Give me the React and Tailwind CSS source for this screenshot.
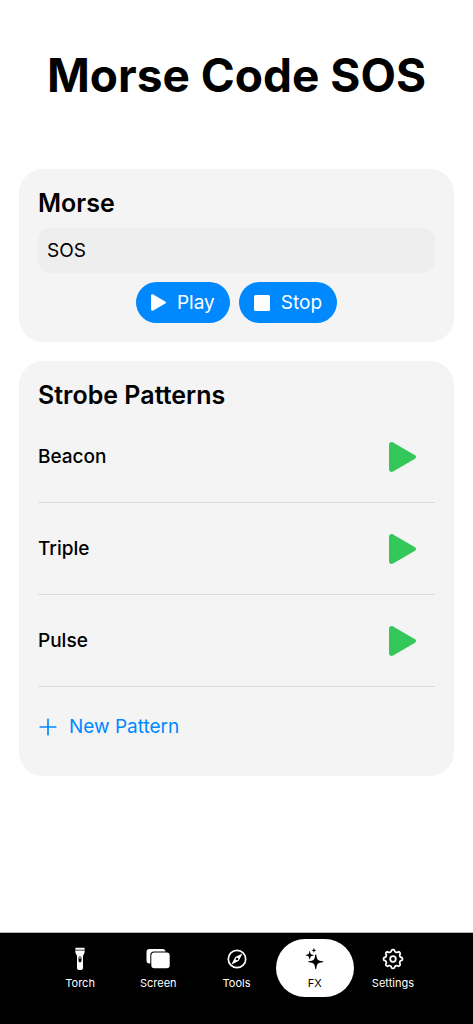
import React, { useState } from 'react';
import clsx from 'clsx';

const PATTERNS = ['Beacon', 'Triple', 'Pulse'];

const PlayIcon = ({ className }) => (
  <svg viewBox="0 0 27 30" className={className} fill="currentColor" aria-hidden="true">
    <path d="M0 2.8C0 .6 2.2-.6 4.1.5L25.6 13c1.9 1.1 1.9 2.9 0 4L4.1 29.5C2.2 30.6 0 29.4 0 27.2Z" />
  </svg>
);

const StopIcon = ({ className }) => (
  <svg viewBox="0 0 16 16" className={className} fill="currentColor" aria-hidden="true">
    <rect width="16" height="16" rx="1.5" />
  </svg>
);

const PlusIcon = ({ className }) => (
  <svg viewBox="0 0 20 20" className={className} fill="none" stroke="currentColor" strokeWidth="1.7" strokeLinecap="round" aria-hidden="true">
    <path d="M10 2.3v15.4M2.3 10h15.4" />
  </svg>
);

const TorchIcon = () => (
  <svg viewBox="0 0 24 24" className="size-6" fill="currentColor" aria-hidden="true">
    <path d="M8.4.8h7.2c.7 0 1.1.4 1.1.9v1H7.3v-1c0-.5.4-.9 1.1-.9Z" />
    <path
      fillRule="evenodd"
      d="M7.3 3.6h9.4v.7c0 1.6-.6 2.6-1.2 3.5-.4.6-.5 1.1-.5 1.9v11.4c0 1.2-.6 1.8-1.7 1.8h-2.6C9.6 22.900 9 22.300 9 21.100V9.700c0-.8-.1-1.300-.5-1.900-.6-.9-1.200-1.900-1.200-3.500ZM12 9.500c-.9 0-1.500.6-1.500 1.500v2.800c0 .9.600 1.500 1.500 1.500s1.500-.6 1.500-1.500V11c0-.9-.6-1.500-1.500-1.500Z"
    />
    <circle cx="12" cy="11.100" r=".8" />
  </svg>
);

const ScreenIcon = () => (
  <svg viewBox="0 0 24 24" className="size-6" fill="currentColor" aria-hidden="true">
    <path d="M3.5 2h13.300c1.600 0 2.600.9 2.800 2.400H8C5.700 4.400 4.300 5.800 4.300 8v8.500H3.500C1.600 16.500.5 15.400.5 13.500V5c0-1.900 1.100-3 3-3Z" />
    <rect x="5.3" y="5.5" width="18.4" height="15.7" rx="3" />
  </svg>
);

const ToolsIcon = () => (
  <svg viewBox="0 0 24 24" className="size-6" fill="none" stroke="currentColor" aria-hidden="true">
    <circle cx="12" cy="12" r="8.7" strokeWidth="1.7" />
    <path
      fill="currentColor"
      fillRule="evenodd"
      stroke="none"
      d="M16.300 6.900c.5-.3 1 .2.700.7l-3.100 6c-.1.200-.2.300-.4.400l-5.900 3.100c-.5.300-1-.2-.7-.7l3.100-5.900c.1-.2.200-.3.400-.4ZM12 10.700a1.300 1.300 0 1 0 0 2.600 1.300 1.300 0 0 0 0-2.600Z"
    />
  </svg>
);

const FxIcon = () => (
  <svg viewBox="0 0 24 24" className="size-6" fill="currentColor" aria-hidden="true">
    <path d="M12.800 7.200c.3 0 .5.200.5.500.8 5.200 1.300 5.700 6.500 6.500.7.100.7.900 0 1-5.200.8-5.700 1.300-6.500 6.500-.1.700-.9.700-1 0-.8-5.200-1.300-5.700-6.500-6.500-.7-.1-.7-.9 0-1 5.200-.8 5.700-1.300 6.500-6.500 0-.3.200-.5.500-.5Z" />
    <path d="M6.700 4.100c.2 0 .3.100.3.300.5 2.700.8 3 3.500 3.500.4.100.4.500 0 .6-2.700.5-3 .8-3.500 3.500-.1.400-.5.400-.6 0-.5-2.700-.8-3-3.500-3.500-.4-.1-.4-.5 0-.6 2.700-.5 3-.8 3.500-3.500 0-.2.100-.3.300-.3Z" />
    <path d="M10.900 1c.1 0 .2.100.2.200.3 1.500.5 1.700 2 2 .3.100.3.400 0 .4-1.500.3-1.700.5-2 2 0 .3-.3.300-.4 0-.3-1.500-.5-1.700-2-2-.3 0-.3-.3 0-.4 1.500-.3 1.700-.5 2-2 0-.1.100-.2.200-.2Z" />
  </svg>
);

const SettingsIcon = () => (
  <svg viewBox="0.5 0.5 23 23" className="size-6" fill="none" stroke="currentColor" strokeWidth="1.7" strokeLinejoin="round" aria-hidden="true">
    <path d="M10.6 3.6A1.8 1.8 0 0 1 13.4 3.6A2.1 2.1 0 0 0 16.95 5.07A1.8 1.8 0 0 1 18.93 7.05A2.1 2.1 0 0 0 20.4 10.6A1.8 1.8 0 0 1 20.4 13.4A2.1 2.1 0 0 0 18.93 16.95A1.8 1.8 0 0 1 16.95 18.93A2.1 2.1 0 0 0 13.4 20.4A1.8 1.8 0 0 1 10.6 20.4A2.1 2.1 0 0 0 7.05 18.93A1.8 1.8 0 0 1 5.07 16.95A2.1 2.1 0 0 0 3.6 13.4A1.8 1.8 0 0 1 3.6 10.6A2.1 2.1 0 0 0 5.07 7.05A1.8 1.8 0 0 1 7.05 5.07A2.1 2.1 0 0 0 10.6 3.6Z" />
    <circle cx="12" cy="12" r="2.7" />
  </svg>
);

const TABS = [
  { name: 'Torch', icon: TorchIcon },
  { name: 'Screen', icon: ScreenIcon },
  { name: 'Tools', icon: ToolsIcon },
  { name: 'FX', icon: FxIcon },
  { name: 'Settings', icon: SettingsIcon },
];

const Card = ({ title, children }) => (
  <section className="rounded-3xl bg-[#f4f4f4] p-[19px]">
    <h2 className="text-[25px] leading-[31px] font-semibold">{title}</h2>
    {children}
  </section>
);

const MorseCard = () => {
  const [message, setMessage] = useState('SOS');

  return (
    <Card title="Morse">
      <input
        type="text"
        aria-label="Morse message"
        value={message}
        onChange={(e) => setMessage(e.target.value)}
        className="mt-[9px] block h-[45px] w-full rounded-xl bg-[#eeeeee] px-[9px] text-[19px] leading-[30px] focus:outline-none"
      />
      <div className="mt-[9px] flex justify-center gap-[9px] text-[19px] leading-[30px] text-white">
        <button type="button" className="flex h-[41px] items-center gap-[11px] rounded-full bg-[#0088ff] px-[15px]">
          <PlayIcon className="h-[17px] w-[15px]" />
          Play
        </button>
        <button type="button" className="flex h-[41px] items-center gap-[11px] rounded-full bg-[#0088ff] px-[15px]">
          <StopIcon className="size-4" />
          Stop
        </button>
      </div>
    </Card>
  );
};

const PatternsCard = () => (
  <Card title="Strobe Patterns">
    <ul>
      {PATTERNS.map((pattern) => (
        <li key={pattern} className="flex h-[92px] items-center justify-between border-b border-[#dadada]">
          <span className="text-[19px] leading-[30px] font-medium">{pattern}</span>
          <button type="button" aria-label={`Play ${pattern}`} className="px-[19px] text-[#34c759]">
            <PlayIcon className="h-[30px] w-[27px]" />
          </button>
        </li>
      ))}
    </ul>
    <button type="button" className="mt-[9px] flex h-[61px] items-center gap-[11px] text-[19px] leading-[30px] text-[#0088ff]">
      <PlusIcon className="size-5" />
      New Pattern
    </button>
  </Card>
);

const TabBar = ({ active }) => (
  <nav className="mt-auto flex border-t border-[#b5b5b5] bg-black px-[41px] pt-[6px] pb-[27px]">
    {TABS.map(({ name, icon: Icon }) => (
      <a
        key={name}
        href={`#${name.toLowerCase()}`}
        aria-current={name === active ? 'page' : undefined}
        className={clsx(
          'flex h-[58px] flex-1 flex-col items-center gap-1 rounded-full pt-2 text-[11px] leading-4',
          name === active ? 'bg-white text-black' : 'text-white'
        )}
      >
        <Icon />
        {name}
      </a>
    ))}
  </nav>
);

export default function App() {
  return (
    <div className="flex min-h-screen flex-col bg-white font-['Inter',sans-serif] text-black">
      <header className="px-4 pt-[47px] pb-[66px] text-center">
        <h1 className="text-[46px] leading-14 font-bold whitespace-nowrap">Morse Code SOS</h1>
      </header>
      <main className="flex flex-col gap-[19px] px-[19px] pb-8">
        <MorseCard />
        <PatternsCard />
      </main>
      <TabBar active="FX" />
    </div>
  );
}
